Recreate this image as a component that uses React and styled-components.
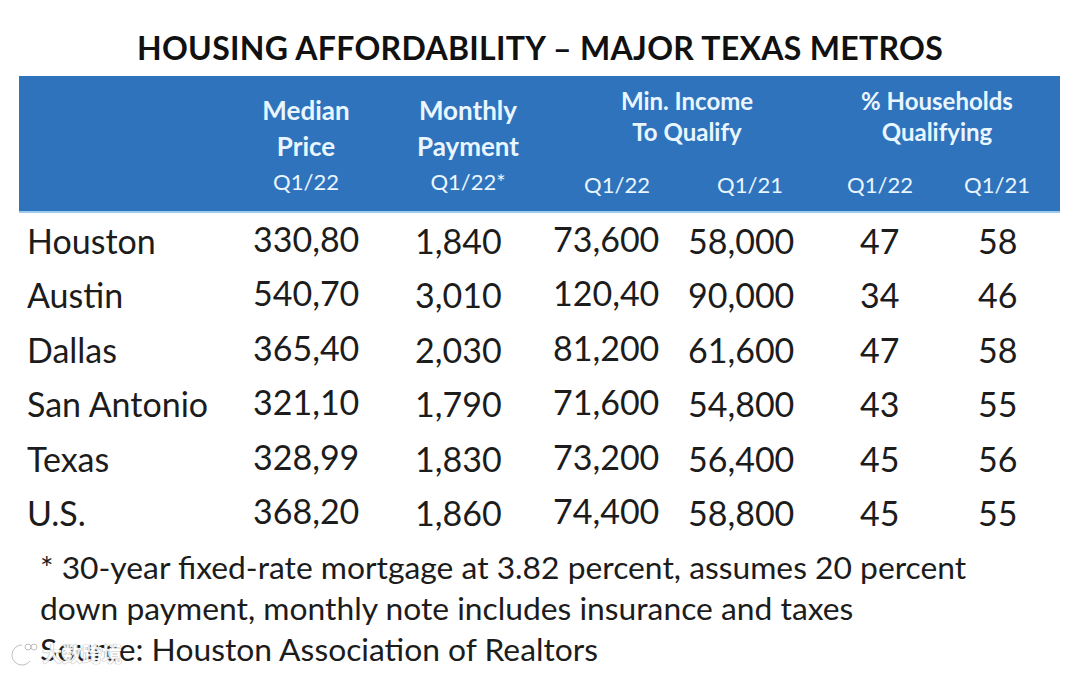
import React from 'react'
import styled, { createGlobalStyle } from 'styled-components'

const rows = [
  ['Houston', '330,80', '1,840', '73,600', '58,000', '47', '58'],
  ['Austin', '540,70', '3,010', '120,40', '90,000', '34', '46'],
  ['Dallas', '365,40', '2,030', '81,200', '61,600', '47', '58'],
  ['San Antonio', '321,10', '1,790', '71,600', '54,800', '43', '55'],
  ['Texas', '328,99', '1,830', '73,200', '56,400', '45', '56'],
  ['U.S.', '368,20', '1,860', '74,400', '58,800', '45', '55'],
]

function App() {
  return (
    <Page>
      <GlobalStyle />
      <Title>HOUSING AFFORDABILITY – MAJOR TEXAS METROS</Title>

      <Header>
        <Single $col={2}>
          <span>Median</span>
          <span>Price</span>
          <Light>Q1/22</Light>
        </Single>
        <Single $col={3}>
          <span>Monthly</span>
          <span>Payment</span>
          <Light>Q1/22*</Light>
        </Single>
        <Group $col="4 / 6">
          <span>Min. Income</span>
          <span>To Qualify</span>
        </Group>
        <Group $col="6 / 8">
          <span>% Households</span>
          <span>Qualifying</span>
        </Group>
        <Sub $col={4}>Q1/22</Sub>
        <Sub $col={5}>Q1/21</Sub>
        <Sub $col={6}>Q1/22</Sub>
        <Sub $col={7}>Q1/21</Sub>
      </Header>

      <Body>
        {rows.map(r => (
          <Row key={r[0]}>
            {r.map((v, i) => (
              <Cell key={i} $lift={i === 1 || i === 3}>{v}</Cell>
            ))}
          </Row>
        ))}
      </Body>

      <Notes>
        <p>* 30-year fixed-rate mortgage at 3.82 percent, assumes 20 percent</p>
        <p>down payment, monthly note includes insurance and taxes</p>
        <p>Source: Houston Association of Realtors</p>
      </Notes>

      <Watermark>
        <svg width="30" height="26" viewBox="0 0 30 26">
          <path d="M14 4 A10 10 0 1 0 22 20" fill="none" stroke="#fff" strokeWidth="3" />
          <path d="M14 4 A10 10 0 1 0 22 20" fill="none" stroke="#b8b8b8" strokeWidth="1" />
          <circle cx="20" cy="6" r="3" fill="none" stroke="#b8b8b8" strokeWidth="1" />
          <circle cx="26" cy="6" r="3" fill="none" stroke="#b8b8b8" strokeWidth="1" />
        </svg>
        <span>大数跨境</span>
      </Watermark>
    </Page>
  )
}

export default App

const GlobalStyle = createGlobalStyle`
  html, body {
    margin: 0;
    padding: 0;
    background: #fff;
  }
`

const Page = styled.div`
  position: relative;
  width: 1080px;
  height: 678px;
  overflow: hidden;
  font-family: Lato, "Open Sans", sans-serif;
  color: #1c1c1c;
`

const Title = styled.h1`
  margin: 0;
  padding-top: 29px;
  height: 76px;
  box-sizing: border-box;
  text-align: center;
  font-size: 32px;
  line-height: 38px;
  font-weight: 700;
  color: #111;
  letter-spacing: 0.3px;
`

const Header = styled.div`
  margin: 0 20px 0 19px;
  height: 135px;
  background: #2f73bd;
  border-bottom: 2px solid #9ccbee;
  display: grid;
  grid-template-columns: 211px 152px 172px 126px 140px 120px 114px;
  grid-template-rows: 81px 54px;
  color: #e9f6ff;
  font-weight: 700;
`

const Single = styled.div`
  grid-column: ${p => p.$col};
  grid-row: 1 / 3;
  display: flex;
  flex-direction: column;
  align-items: center;
  padding-top: 17px;
  font-size: 26px;
  line-height: 35.5px;
`

const Light = styled.span`
  font-weight: 400;
  font-size: 22px;
`

const Group = styled.div`
  grid-column: ${p => p.$col};
  grid-row: 1;
  display: flex;
  flex-direction: column;
  align-items: center;
  padding-top: 9px;
  font-size: 24px;
  line-height: 31px;
`

const Sub = styled.div`
  grid-column: ${p => p.$col};
  grid-row: 2;
  display: flex;
  align-items: center;
  justify-content: center;
  font-weight: 400;
  font-size: 22px;
`

const Body = styled.div`
  margin-left: 19px;
`

const Row = styled.div`
  display: grid;
  grid-template-columns: 226px 162px 138px 135px 172px 118px 90px;
  height: 54.5px;
  align-items: center;
  font-size: 34px;
`

const Cell = styled.div`
  padding-left: 8px;
  position: relative;
  top: ${p => (p.$lift ? '-2px' : '0')};
  white-space: nowrap;
`

const Notes = styled.div`
  padding: 7px 0 0 40px;
  font-size: 31.8px;
  line-height: 41px;

  p {
    margin: 0;
    white-space: nowrap;
  }
`

const Watermark = styled.div`
  position: absolute;
  left: 8px;
  bottom: 10px;
  display: flex;
  align-items: center;
  gap: 4px;
  font-family: "Noto Sans CJK SC", sans-serif;
  font-size: 20px;
  font-weight: 700;
  color: #fff;
  text-shadow: 0 0 1px #999, 0 0 1px #999;
  opacity: 0.9;
`
